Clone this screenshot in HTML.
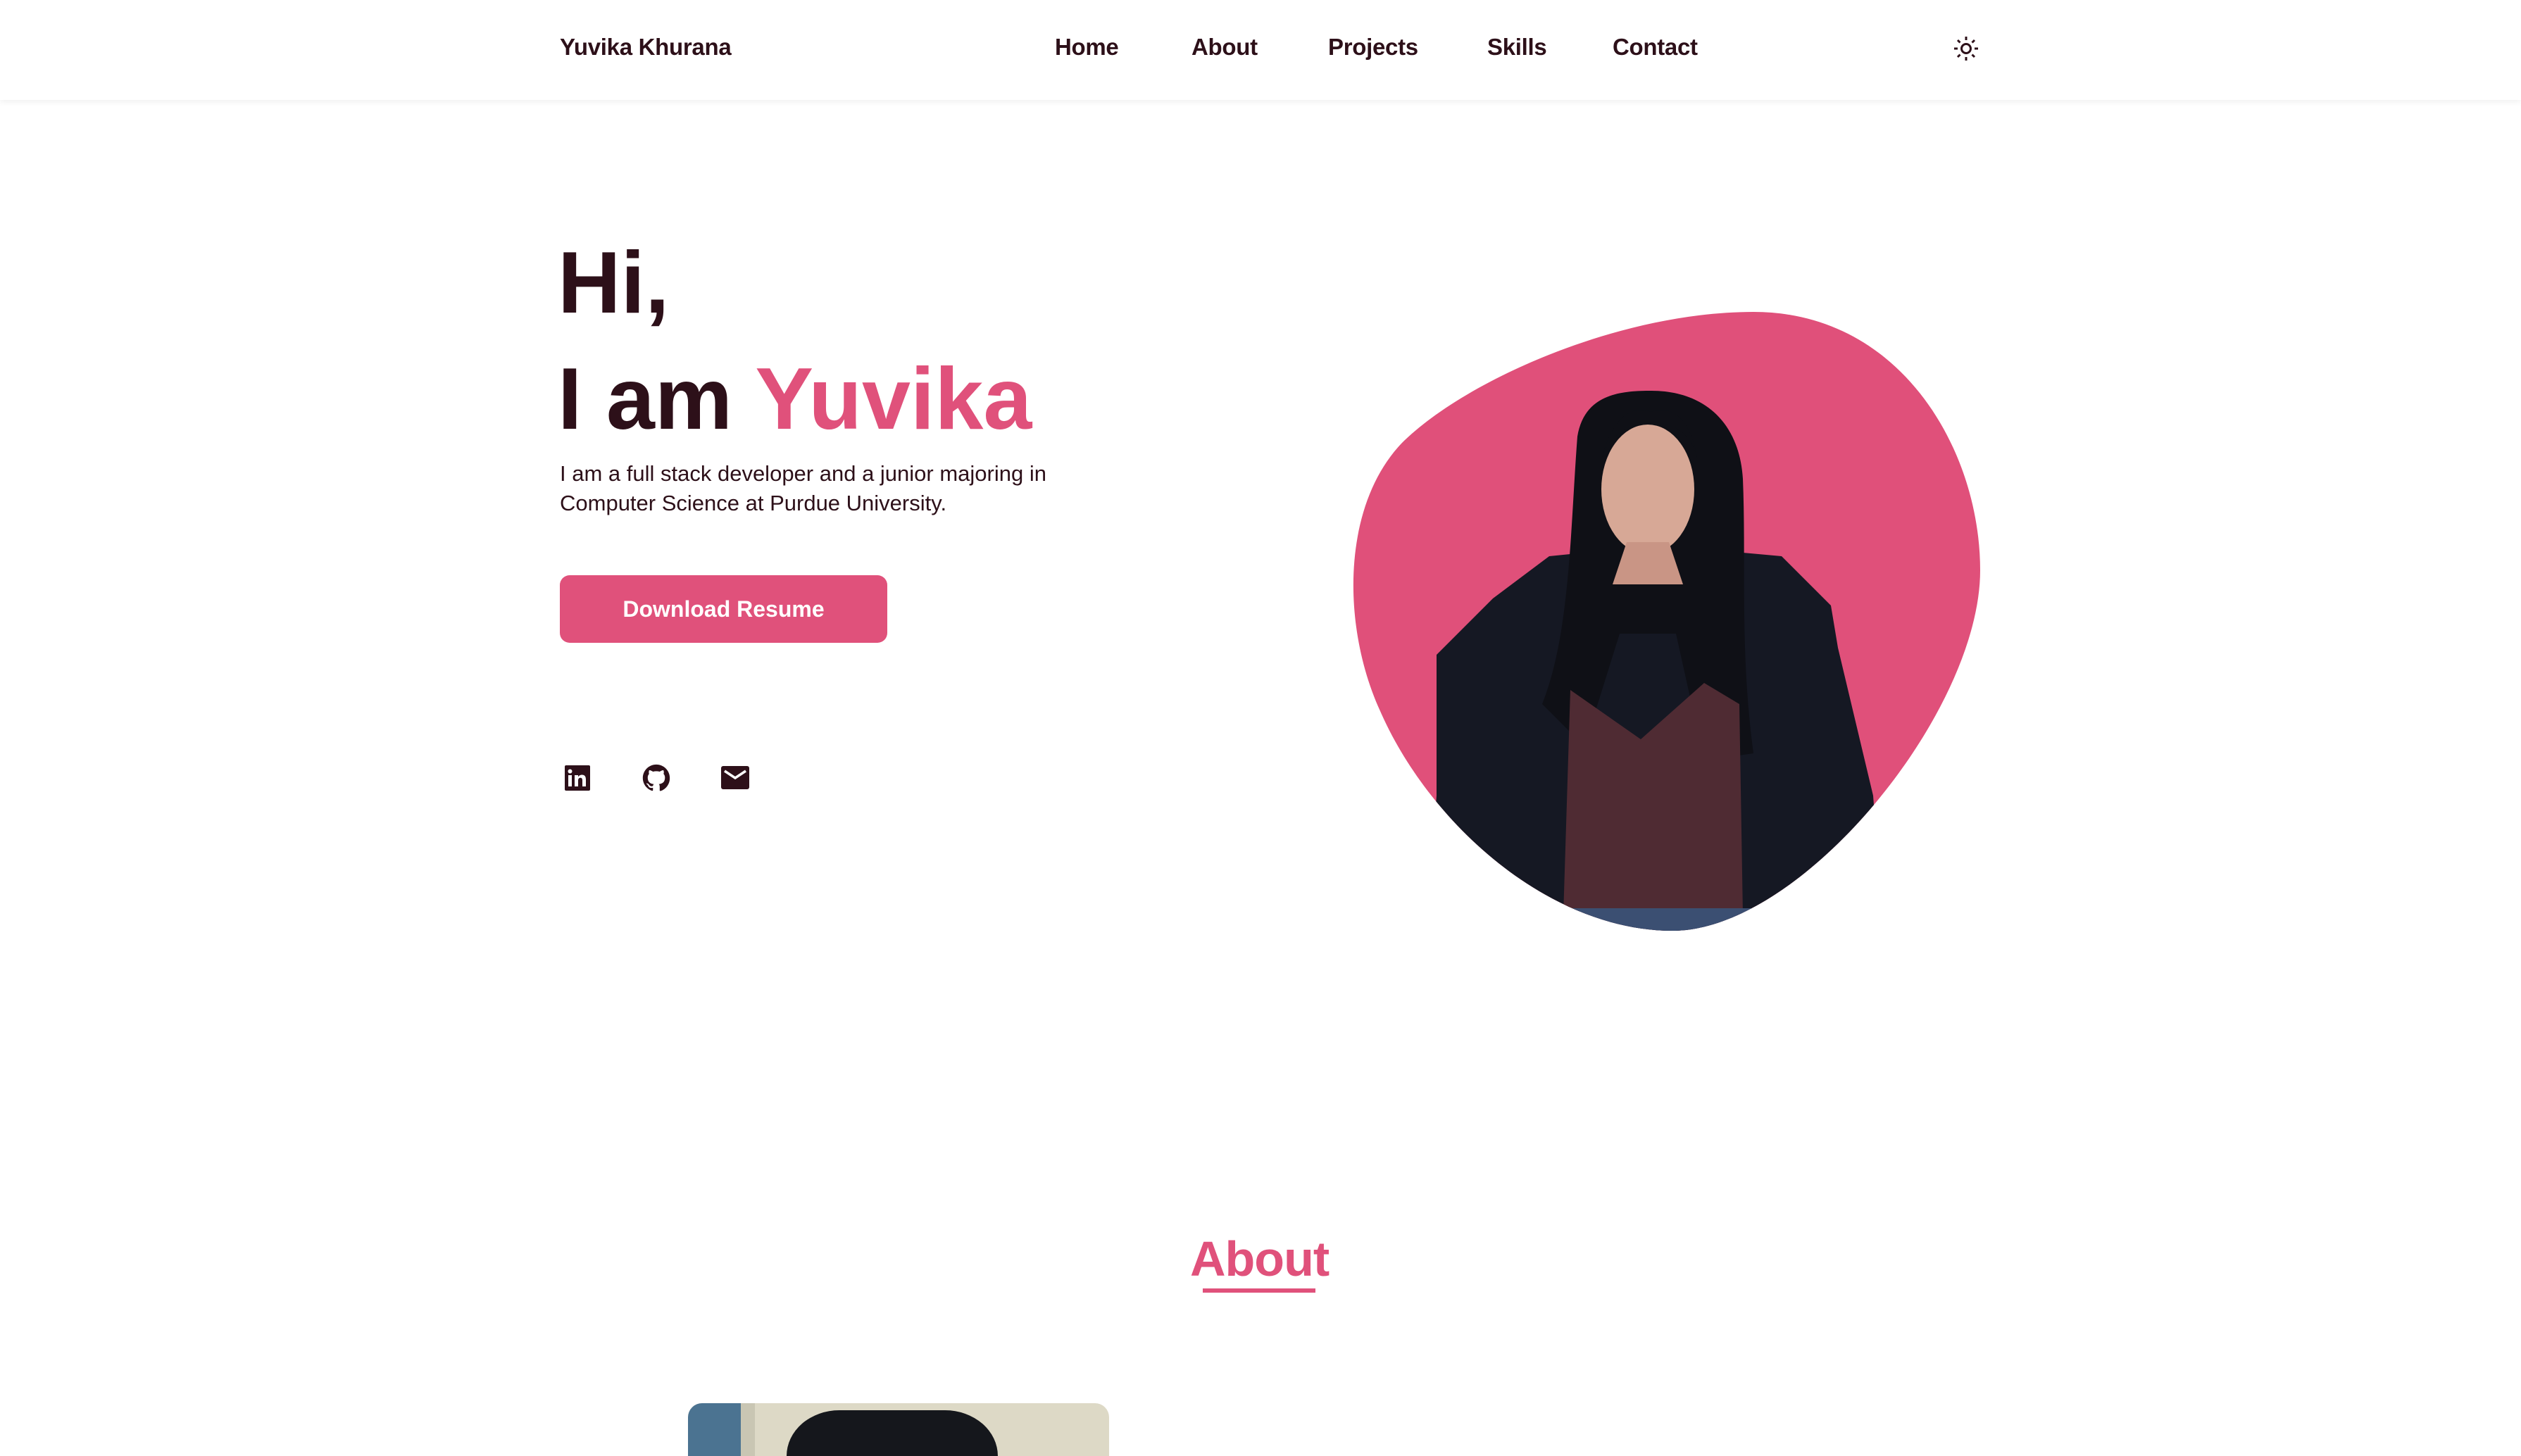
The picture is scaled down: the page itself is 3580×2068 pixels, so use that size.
<!DOCTYPE html>
<html><head><meta charset="utf-8">
<style>
html,body{margin:0;padding:0;background:#fff;width:3580px;height:2068px;overflow:hidden;}
body{position:relative;font-family:"Liberation Sans",sans-serif;color:#2d1019;}
.nav{position:absolute;left:0;top:0;width:3580px;height:142px;background:#fff;box-shadow:0 3px 8px rgba(0,0,0,0.06);}
.a{position:absolute;white-space:nowrap;}
.nl{font-weight:bold;font-size:33px;top:48px;letter-spacing:-0.3px;}
.h1{font-weight:bold;font-size:124px;letter-spacing:0px;line-height:1;}
.p{font-size:31px;line-height:42px;}
.btn{position:absolute;left:795px;top:817px;width:465px;height:96px;background:#e0517b;border-radius:14px;color:#fff;font-weight:bold;font-size:32px;text-align:center;line-height:96px;}
</style></head><body>
<div class="nav"></div>
<div class="a nl" style="left:795px;">Yuvika Khurana</div>
<div class="a nl" style="left:1498px;">Home</div>
<div class="a nl" style="left:1692px;">About</div>
<div class="a nl" style="left:1886px;">Projects</div>
<div class="a nl" style="left:2112px;">Skills</div>
<div class="a nl" style="left:2290px;">Contact</div>
<svg class="a" style="left:2772px;top:49px" width="40" height="40" viewBox="0 0 40 40">
<circle cx="20" cy="20" r="6.5" fill="none" stroke="#2d1019" stroke-width="3"/>
<g stroke="#2d1019" stroke-width="3" stroke-linecap="butt">
<line x1="20" y1="3" x2="20" y2="8"/><line x1="20" y1="32" x2="20" y2="37"/>
<line x1="3" y1="20" x2="8" y2="20"/><line x1="32" y1="20" x2="37" y2="20"/>
<line x1="8" y1="8" x2="11.5" y2="11.5"/><line x1="28.5" y1="28.5" x2="32" y2="32"/>
<line x1="32" y1="8" x2="28.5" y2="11.5"/><line x1="11.5" y1="28.5" x2="8" y2="32"/>
</g></svg>

<div class="a h1" style="left:792px;top:340px;">Hi,</div>
<div class="a h1" style="left:792px;top:505px;">I am <span style="color:#e0517b">Yuvika</span></div>
<div class="a p" style="left:795px;top:652px;">I am a full stack developer and a junior majoring in<br>Computer Science at Purdue University.</div>
<div class="btn">Download Resume</div>

<svg class="a" style="left:800px;top:1085px" width="40" height="40" viewBox="0 0 40 40">
<rect x="2" y="2" width="36" height="36" rx="2" fill="#2d1019"/>
<rect x="7" y="16" width="5" height="16" fill="#fff"/><circle cx="9.5" cy="10.5" r="3" fill="#fff"/>
<path d="M16 16h5v2.5c1-1.8 3-3 5.5-3 4 0 5.5 2.5 5.5 7V32h-5v-8.5c0-2.5-.8-3.8-2.8-3.8s-3.2 1.5-3.2 3.8V32h-5z" fill="#fff"/>
</svg>
<svg class="a" style="left:912px;top:1085px" width="40" height="40" viewBox="0 0 24 24">
<path fill="#2d1019" d="M12 .5C5.650.5.5 5.65.5 12c0 5.08 3.29 9.39 7.860 10.91.58.1.79-.25.79-.56v-2c-3.2.7-3.870-1.36-3.870-1.36-.52-1.33-1.28-1.69-1.28-1.69-1.04-.71.08-.7.08-.7 1.15.08 1.76 1.18 1.76 1.18 1.03 1.76 2.69 1.25 3.35.96.1-.74.4-1.25.73-1.54-2.55-.29-5.24-1.28-5.24-5.68 0-1.25.45-2.28 1.18-3.08-.12-.29-.51-1.46.11-3.04 0 0 .97-.31 3.17 1.18a11 11 0 0 1 5.77 0c2.2-1.49 3.17-1.18 3.17-1.18.63 1.58.23 2.75.11 3.04.74.8 1.18 1.83 1.18 3.08 0 4.41-2.69 5.38-5.26 5.67.41.36.78 1.06.78 2.14v3.17c0 .31.21.67.8.56A11.5 11.5 0 0 0 23.5 12C23.5 5.65 18.35.5 12 .5z"/>
</svg>
<svg class="a" style="left:1024px;top:1088px" width="40" height="34" viewBox="0 0 40 34">
<rect x="0" y="0" width="40" height="33" rx="3" fill="#2d1019"/>
<path d="M5 7 L20 17 L35 7" fill="none" stroke="#fff" stroke-width="3.5"/>
</svg>

<svg class="a" style="left:0;top:0" width="3580" height="1500" viewBox="0 0 3580 1500">
<defs><clipPath id="blob"><path d="M2490 443 C2700 443 2812 640 2812 810 C2812 1010 2560 1322 2375 1322 C2200 1322 2030 1170 1960 1010 C1905 890 1905 720 1990 630 C2080 540 2300 443 2490 443 Z"/></clipPath></defs>
<path d="M2490 443 C2700 443 2812 640 2812 810 C2812 1010 2560 1322 2375 1322 C2200 1322 2030 1170 1960 1010 C1905 890 1905 720 1990 630 C2080 540 2300 443 2490 443 Z" fill="#e0507a"/>
<g clip-path="url(#blob)">
<path d="M2040 930 L2120 850 L2200 790 L2300 780 L2420 780 L2530 790 L2600 860 L2610 920 L2660 1130 L2680 1400 L2020 1400 L2040 1130 Z" fill="#151823"/>
<path d="M2240 620 C2250 560 2300 555 2345 555 C2420 555 2470 600 2475 680 C2480 800 2470 920 2490 1070 L2420 1080 L2380 900 L2300 900 L2250 1060 L2190 1000 C2230 900 2230 750 2240 620 Z" fill="#0f1016"/>
<ellipse cx="2340" cy="695" rx="66" ry="92" fill="#d7a896"/>
<path d="M2275 650 C2290 590 2320 575 2345 585 C2370 575 2400 590 2410 650 C2400 610 2370 600 2345 600 C2320 600 2285 615 2275 650 Z" fill="#0f1016"/>
<path d="M2310 770 L2370 770 L2390 830 L2290 830 Z" fill="#c99585"/>
<path d="M2230 980 L2330 1050 L2420 970 L2470 1000 L2475 1300 L2220 1300 Z" fill="#4f2b33"/>
<rect x="2230" y="1290" width="260" height="40" fill="#3b4f72"/>
</g>
</svg>

<div class="a" style="left:1690px;top:1748px;font-weight:bold;font-size:70px;color:#e0517b;letter-spacing:-1px;">About</div>
<div class="a" style="left:1708px;top:1830px;width:160px;height:6px;background:#e0517b;"></div>

<div class="a" style="left:977px;top:1993px;width:598px;height:75px;border-radius:20px 20px 0 0;overflow:hidden;background:#ddd9c6;">
<div style="position:absolute;left:0;top:0;width:75px;height:75px;background:#4b7391;"></div>
<div style="position:absolute;left:75px;top:0;width:20px;height:75px;background:#c9c6b3;"></div>
<div style="position:absolute;left:140px;top:10px;width:300px;height:65px;border-radius:150px 150px 0 0/130px 130px 0 0;background:#15171c;"></div>
</div>
</body></html>
